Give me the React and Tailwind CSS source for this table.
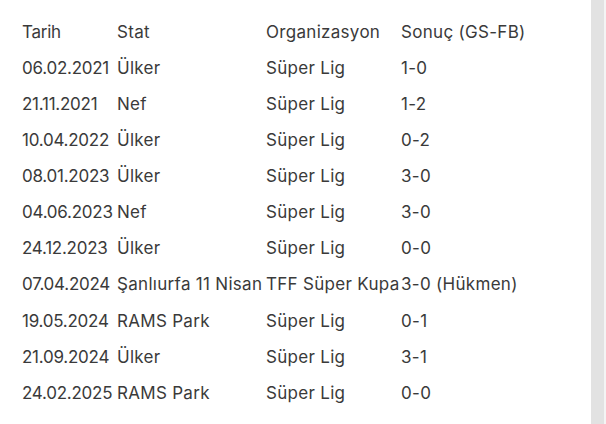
import React from "react";

const rows = [
  ["06.02.2021", "Ülker", "Süper Lig", "1-0"],
  ["21.11.2021", "Nef", "Süper Lig", "1-2"],
  ["10.04.2022", "Ülker", "Süper Lig", "0-2"],
  ["08.01.2023", "Ülker", "Süper Lig", "3-0"],
  ["04.06.2023", "Nef", "Süper Lig", "3-0"],
  ["24.12.2023", "Ülker", "Süper Lig", "0-0"],
  ["07.04.2024", "Şanlıurfa 11 Nisan", "TFF Süper Kupa", "3-0 (Hükmen)"],
  ["19.05.2024", "RAMS Park", "Süper Lig", "0-1"],
  ["21.09.2024", "Ülker", "Süper Lig", "3-1"],
  ["24.02.2025", "RAMS Park", "Süper Lig", "0-0"],
];

function Row({ cells }) {
  return (
    <div className="grid grid-cols-[95px_149px_135px_1fr] h-[36.1px] items-center">
      {cells.map((c, i) => (
        <div
          key={i}
          className={i === 0 ? "whitespace-nowrap tracking-[-0.25px]" : "whitespace-nowrap tracking-[0.3px]"}
        >
          {c}
        </div>
      ))}
    </div>
  );
}

export default function App() {
  return (
    <div className="w-[606px] h-[424px] bg-white flex overflow-hidden text-[#3a3a3a] text-[17px] font-['Inter',sans-serif]">
      <div className="flex-1 pl-[22px] pt-[14.5px]">
        <Row cells={["Tarih", "Stat", "Organizasyon", "Sonuç (GS-FB)"]} />
        {rows.map((r, i) => (
          <Row key={i} cells={r} />
        ))}
      </div>
      <div className="w-[13px] h-full bg-[#e2e2e2]" />
      <div className="w-[2px] h-full bg-[#f4f4f4]" />
    </div>
  );
}
